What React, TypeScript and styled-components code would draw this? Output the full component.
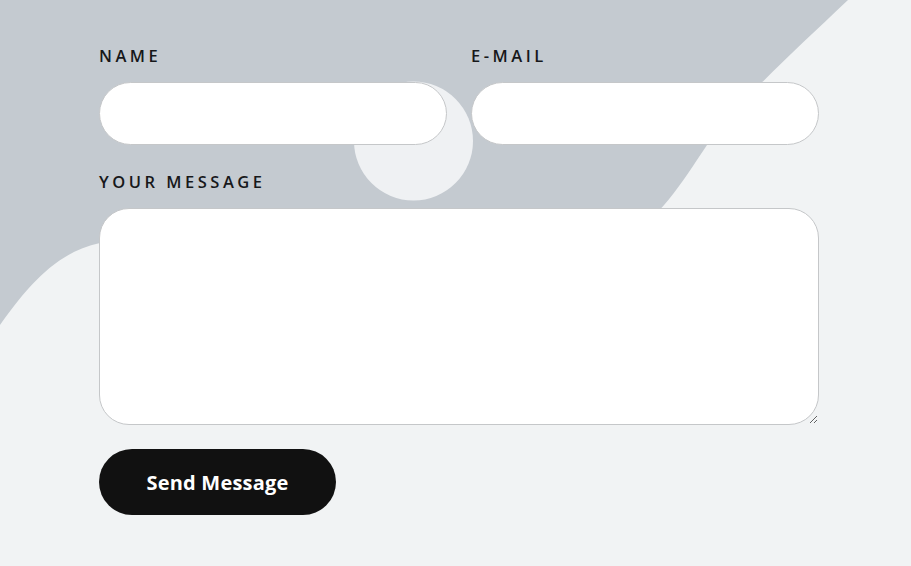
import React from "react";
import styled, { createGlobalStyle } from "styled-components";

const Global = createGlobalStyle`
  html, body { margin: 0; padding: 0; }
  body { font-family: "Open Sans", "Liberation Sans", sans-serif; }
  * { box-sizing: border-box; }
`;

const Page = styled.div`
  position: relative;
  width: 911px;
  height: 566px;
  overflow: hidden;
  background: #f1f3f4;
`;

const Backdrop = styled.svg`
  position: absolute;
  inset: 0;
  width: 911px;
  height: 566px;
`;

const Form = styled.form`
  position: relative;
  width: 720px;
  margin-left: 99px;
  padding-top: 44px;
  display: grid;
  grid-template-columns: 1fr 1fr;
  column-gap: 24px;
  row-gap: 25px;
`;

const Field = styled.div<{ $wide?: boolean }>`
  display: flex;
  flex-direction: column;
  grid-column: ${(p) => (p.$wide ? "1 / -1" : "auto")};
`;

const Label = styled.label`
  font-family: "Open Sans", "Liberation Sans", sans-serif;
  font-size: 16.5px;
  font-weight: 600;
  line-height: 24px;
  letter-spacing: 3.5px;
  color: #17181a;
  text-transform: uppercase;
  margin-bottom: 14px;
`;

const Input = styled.input`
  height: 63px;
  border: 1px solid #c5c7c9;
  border-radius: 32px;
  background: #fff;
  padding: 0 28px;
  font-size: 16px;
  outline: none;
`;

const Area = styled.textarea`
  height: 217px;
  border: 1px solid #c5c7c9;
  border-radius: 30px;
  background: #fff;
  padding: 20px 28px;
  font-size: 16px;
  outline: none;
  resize: vertical;
`;

const Submit = styled.button`
  grid-column: 1 / -1;
  justify-self: start;
  margin-top: -1px;
  width: 237px;
  height: 66px;
  border: none;
  border-radius: 33px;
  background: #111111;
  color: #fff;
  font-family: "Open Sans", "Liberation Sans", sans-serif;
  font-size: 20px;
  font-weight: 700;
  letter-spacing: 0.2px;
  cursor: pointer;
`;

export default function App() {
  return (
    <Page>
      <Global />
      <Backdrop viewBox="0 0 911 566" aria-hidden>
        <path
          d="M0,0 L848,0 C790,55 740,100 707,145 C680,185 660,220 620,240 C520,260 220,225 100,243 C55,252 25,290 0,325 Z"
          fill="#c4cad0"
        />
        <circle cx="413.5" cy="141" r="59.5" fill="#eff1f3" />
      </Backdrop>
      <Form onSubmit={(e) => e.preventDefault()}>
        <Field>
          <Label htmlFor="name">Name</Label>
          <Input id="name" type="text" />
        </Field>
        <Field>
          <Label htmlFor="email">E-mail</Label>
          <Input id="email" type="email" />
        </Field>
        <Field $wide>
          <Label htmlFor="msg">Your Message</Label>
          <Area id="msg" />
        </Field>
        <Submit type="submit">Send Message</Submit>
      </Form>
    </Page>
  );
}
